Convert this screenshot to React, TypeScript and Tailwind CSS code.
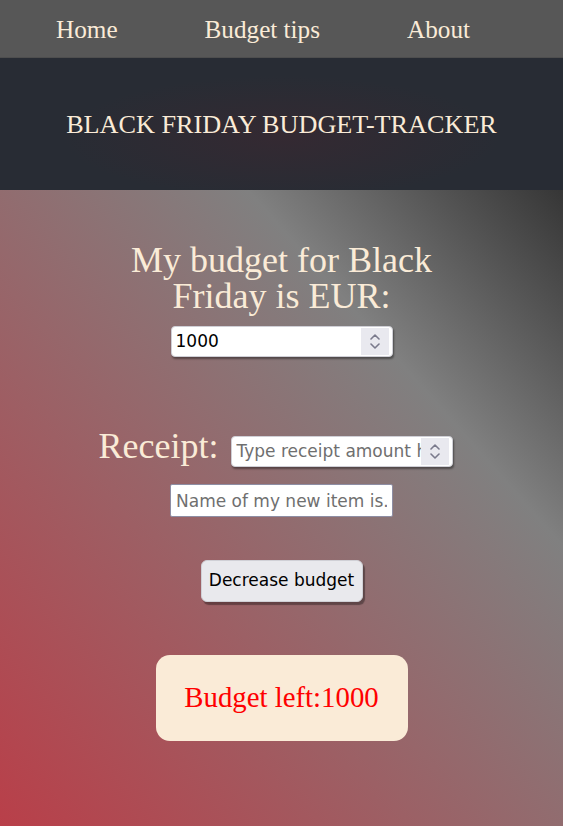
import React, { useState } from 'react';

const Spinner: React.FC = () => (
  <div className="flex h-full w-[28px] shrink-0 flex-col items-center justify-center gap-[3px] bg-[#e9e9ef]">
    <svg width="10" height="6" viewBox="0 0 10 6" fill="none">
      <path d="M1 5L5 1L9 5" stroke="#7a7a8c" strokeWidth="1.6" strokeLinecap="round" strokeLinejoin="round" />
    </svg>
    <svg width="10" height="6" viewBox="0 0 10 6" fill="none">
      <path d="M1 1L5 5L9 1" stroke="#7a7a8c" strokeWidth="1.6" strokeLinecap="round" strokeLinejoin="round" />
    </svg>
  </div>
);

interface NumberBoxProps {
  value: string;
  placeholder?: string;
  onChange: (v: string) => void;
  className?: string;
}

const NumberBox: React.FC<NumberBoxProps> = ({ value, placeholder, onChange, className = '' }) => (
  <div
    className={`flex h-[31px] w-[222px] items-stretch rounded-[4px] border border-[#cfcfd6] bg-white py-[1px] pr-[3px] shadow-[1px_2px_2px_rgba(0,0,0,0.4)] ${className}`}
  >
    <input
      type="text"
      value={value}
      placeholder={placeholder}
      onChange={(e) => onChange(e.target.value)}
      className="min-w-0 flex-1 bg-transparent pl-[4px] font-['DejaVu_Sans',sans-serif] text-[17px] text-black outline-none placeholder:text-[#6f6f6f]"
    />
    <Spinner />
  </div>
);

const App: React.FC = () => {
  const [budget, setBudget] = useState('1000');
  const [receipt, setReceipt] = useState('');
  const [itemName, setItemName] = useState('');
  const [left, setLeft] = useState(1000);

  const handleDecrease = () => {
    const amount = parseFloat(receipt) || 0;
    setLeft((parseFloat(budget) || 0) - amount);
  };

  return (
    <div className="flex min-h-screen flex-col font-['Liberation_Serif',serif] text-[#faebd7]">
      {/* Top navigation */}
      <nav className="flex h-[58px] items-center gap-[87px] border-b border-[#4e4e4e] bg-[#575757] pl-[56px] pt-[3px] text-[25.2px]">
        <a href="#">Home</a>
        <a href="#">Budget tips</a>
        <a href="#">About</a>
      </nav>

      {/* Header */}
      <header className="flex h-[132px] items-center justify-center bg-[#282c34] bg-[radial-gradient(ellipse_at_50%_60%,rgba(80,35,45,0.3),rgba(40,44,52,0)_55%)]">
        <h1 className="pt-[2px] text-[26.2px] font-normal">BLACK FRIDAY BUDGET-TRACKER</h1>
      </header>

      {/* Main */}
      <main className="flex flex-1 flex-col items-center bg-[linear-gradient(to_top_right,#b93f49_0%,#808080_72%,#363636_100%)]">
        <h2 className="mt-[52px] w-[330px] text-center text-[36px] font-normal leading-[36px]">
          My budget for Black Friday is EUR:
        </h2>
        <NumberBox value={budget} onChange={setBudget} className="mt-[12px]" />

        <div className="mt-[71px] flex items-start gap-[13px] pr-[11px]">
          <label className="text-[36px] leading-[36px]">Receipt:</label>
          <NumberBox
            value={receipt}
            placeholder="Type receipt amount here"
            onChange={setReceipt}
            className="mt-[8px]"
          />
        </div>

        <input
          type="text"
          value={itemName}
          placeholder="Name of my new item is..."
          onChange={(e) => setItemName(e.target.value)}
          className="mt-[17px] h-[33px] w-[223px] rounded-[2px] border-[1.5px] border-[#8e8ea4] bg-white px-[5px] font-['DejaVu_Sans',sans-serif] text-[17px] text-black outline-none placeholder:text-[#6f6f6f]"
        />

        <button
          type="button"
          onClick={handleDecrease}
          className="mt-[43px] h-[42px] w-[162px] rounded-[6px] border border-[#d0d0d6] bg-[#e9e9ed] font-['DejaVu_Sans',sans-serif] text-[17px] text-black shadow-[2px_3px_1px_rgba(0,0,0,0.35)]"
        >
          Decrease budget
        </button>

        <div className="mt-[53px] mb-[40px] flex h-[86px] w-[252px] items-center justify-center rounded-[14px] bg-[#faebd7]">
          <p className="text-[28.8px] text-[#ff0000]">Budget left:{left}</p>
        </div>
      </main>
    </div>
  );
};

export default App;
